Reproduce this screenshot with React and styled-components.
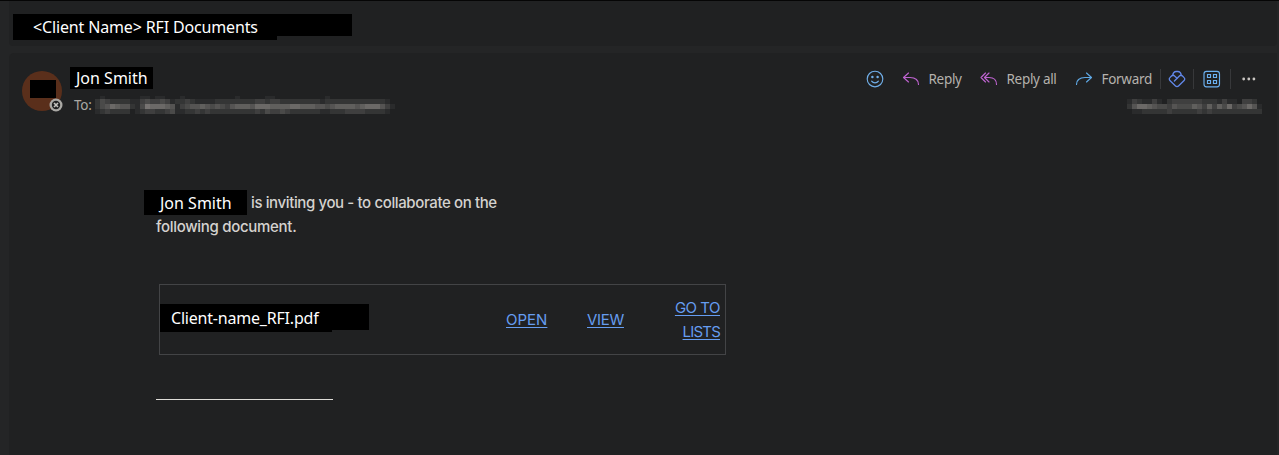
import React from "react";
import styled, { createGlobalStyle } from "styled-components";

const Global = createGlobalStyle`
  * { box-sizing: border-box; }
  body { margin: 0; background: #242526; overflow: hidden; }
`;

const ui = `"Noto Sans", "Open Sans", sans-serif`;

const Window = styled.main`
  height: 455px;
  display: flex;
  flex-direction: column;
  gap: 7px;
  padding: 0 2px 0 9px;
  border-top: 1px solid #050505;
  background: #242526;
  font-family: ${ui};
`;

const SubjectBar = styled.header`
  height: 45px;
  flex: none;
  padding: 13px 0 0 4px;
  background: #202122;
  border-radius: 0 0 4px 4px;
`;

const Message = styled.article`
  flex: 1;
  background: #202122;
  border-radius: 5px 0 0 0;
`;

const Row = styled.div`
  display: flex;
  align-items: flex-start;
`;

const Redaction = styled.div`
  flex: none;
  width: ${(p) => p.$w}px;
  height: ${(p) => p.$h}px;
  padding-left: ${(p) => p.$pad || 0}px;
  background: #000;
  color: #fff;
  font: 400 16px/${(p) => p.$line || p.$h}px ${ui};
  letter-spacing: ${(p) => p.$track || 0}px;
  white-space: nowrap;
`;

const MessageHead = styled.div`
  display: flex;
  height: 66px;
  padding: 14px 15px 0 13px;
`;

const Avatar = styled.div`
  position: relative;
  width: 40px;
  height: 40px;
  margin-top: 4px;
  padding: 9px 0 0 8px;
  border-radius: 50%;
  background: #5a2f1b;
`;

const Presence = styled.svg`
  position: absolute;
  left: 27px;
  top: 27px;
`;

const Sender = styled.div`
  flex: 1;
  padding-left: 8px;
`;

const Recipient = styled.div`
  display: flex;
  height: 18px;
  margin-top: 7px;
  padding-left: 4px;
`;

const ToLabel = styled.span`
  width: 21px;
  color: #aaa8a4;
  font-size: 13.5px;
  line-height: 19px;
  letter-spacing: -0.2px;
`;

const Tools = styled.div`
  display: flex;
  flex-direction: column;
  align-items: flex-end;
`;

const ToolRow = styled.nav`
  display: flex;
  align-items: center;
  height: 24px;
`;

const Tool = styled.button`
  display: flex;
  align-items: center;
  width: ${(p) => p.$w}px;
  height: 24px;
  padding: 0;
  border: 0;
  background: none;
  color: #b5b2ad;
  font: 13.5px/24px ${ui};
  letter-spacing: -0.3px;
  white-space: nowrap;
  svg { flex: none; margin-right: 8.5px; }
`;

const Divider = styled.i`
  width: 1px;
  height: 20px;
  margin-right: ${(p) => p.$gap}px;
  background: #37383a;
`;

const MosaicGrid = styled.div`
  display: grid;
  grid-template-columns: repeat(${(p) => p.$cols}, 5px);
  grid-template-rows: ${(p) => p.$rows};
`;

const Cell = styled.i`
  background: ${(p) => p.$shade};
`;

const DateStamp = styled.div`
  padding-top: 8px;
`;

const Body = styled.section`
  padding: 71px 0 0 135px;
  color: #d4d2cf;
  font: 500 15px/24px Inter, sans-serif;
`;

const Invite = styled.span`
  padding-left: 4px;
  line-height: 25px;
  letter-spacing: -0.38px;
  white-space: nowrap;
`;

const SecondLine = styled.div`
  padding-left: 12px;
  height: 24px;
  letter-spacing: -0.3px;
`;

const FileCard = styled.div`
  display: flex;
  align-items: center;
  width: 567px;
  height: 71px;
  margin: 45px 0 0 15px;
  padding-right: 5px;
  border: 1px solid #434446;
`;

const FileName = styled.div`
  display: flex;
  align-items: flex-start;
  width: 346px;
  margin-top: -4px;
`;

const Link = styled.a`
  width: ${(p) => p.$w}px;
  margin-left: ${(p) => p.$gap || 0}px;
  color: #669df0;
  font: 400 15px/24px Inter, sans-serif;
  letter-spacing: ${(p) => p.$track}px;
  text-align: ${(p) => p.$align || "left"};
  text-decoration: underline;
  text-underline-offset: 2px;
  white-space: nowrap;
`;

const TightText = styled.span`
  letter-spacing: -0.8px;
`;

const Rule = styled.hr`
  width: 177px;
  height: 1px;
  margin: 44px 0 0 12px;
  border: 0;
  background: #dedcd8;
`;

/* Each digit is a brightness step of one mosaic block. */
const steps = ["#202122", "#2a2b2c", "#343535", "#3f3f3f", "#4a4a49", "#555453", "#605f5d", "#6b6967", "#767371"];

const recipientBlocks = [
  "010000000110110001000000000010000011000000000010000000000000",
  "243222211343343122321111222222223323322222222122222222222210",
  "245765521487776513455654543566657776666776665545666656777531",
  "123222201233223411223232222222223243343222222112223333222210",
];
const dateBlocks = [
  "132113102333333222131103320",
  "257765443544465363647345751",
  "011222223222223232222222222",
];

function Mosaic({ data, rows }) {
  return (
    <MosaicGrid $cols={data[0].length} $rows={rows} aria-hidden="true">
      {data.flatMap((line, y) => [...line].map((n, x) => <Cell key={`${y}-${x}`} $shade={steps[n]} />))}
    </MosaicGrid>
  );
}

const line = { fill: "none", strokeWidth: 1.15, strokeLinecap: "round", strokeLinejoin: "round" };

const Smile = () => (
  <svg width="18" height="18" viewBox="0 0 18 18" {...line} stroke="#70aee8">
    <circle cx="9" cy="9" r="7.8" />
    <path d="M5.6 11.2c1.7 2.3 5.1 2.3 6.8 0" />
    <circle cx="6.4" cy="7" r=".65" fill="#70aee8" />
    <circle cx="11.6" cy="7" r=".65" fill="#70aee8" />
  </svg>
);
const ReplyIcon = () => (
  <svg width="18" height="18" viewBox="0 0 18 18" {...line} stroke="#bd63cf">
    <path d="M6.5 3 1.5 7.5l5 4.5M1.7 7.5H8c5 0 8.5 2.2 8.5 7" />
  </svg>
);
const ReplyAllIcon = () => (
  <svg width="18" height="18" viewBox="0 0 18 18" {...line} stroke="#bd63cf">
    <path d="M5.5 3 1 7.5 5.5 12M9 3 4.5 7.5 9 12M4.7 7.5H9c4.7 0 7.5 2.5 7.5 7" />
  </svg>
);
const ForwardIcon = () => (
  <svg width="18" height="18" viewBox="0 0 18 18" {...line} stroke="#5fa9e6">
    <path d="m11.5 3 5 4.5-5 4.5M16.3 7.5H10c-5 0-8.5 2.2-8.5 7" />
  </svg>
);
const LoopIcon = () => (
  <svg width="18" height="18" viewBox="0 0 18 18" {...line} strokeWidth="1.3" stroke="#6288ea">
    <path d="M4.9 5.6V4.9a3.3 3.3 0 0 1 3.3-3.4h1.6a3.3 3.3 0 0 1 3.3 3.4v.7" />
    <path d="M9.3 8.4 6.6 6a2.2 2.2 0 0 0-3.1 0L1.9 7.6a2 2 0 0 0 0 2.9l5.6 5.5a2.1 2.1 0 0 0 3 0l5.6-5.5a2 2 0 0 0 0-2.9L14.5 6a2.2 2.2 0 0 0-3.1 0l-5 5" />
  </svg>
);
const AppsIcon = () => (
  <svg width="18" height="18" viewBox="0 0 18 18" {...line} stroke="#6bb0f0">
    <rect x="1" y="1.3" width="15.5" height="15.5" rx="2.5" />
    <path d="M4.5 4.5h3v3h-3zM10.5 4.5h3v3h-3zM4.5 10.5h3v3h-3zM10.5 10.5h3v3h-3z" strokeLinejoin="miter" />
  </svg>
);
const MoreIcon = () => (
  <svg width="18" height="18" viewBox="0 0 18 18" fill="#c9c6c2">
    <circle cx="3.7" cy="9" r="1.4" /><circle cx="8.8" cy="9" r="1.4" /><circle cx="13.9" cy="9" r="1.4" />
  </svg>
);

export default function App() {
  return (
    <>
      <Global />
      <Window>
        <SubjectBar>
          <Row>
            <Redaction $w={264} $h={26} $pad={20} $track={-0.15}>&lt;Client Name&gt; RFI Documents</Redaction>
            <Redaction $w={75} $h={22} />
          </Row>
        </SubjectBar>
        <Message>
          <MessageHead>
            <Avatar>
              <Redaction $w={26} $h={18} />
              <Presence width="14" height="14" viewBox="0 0 14 14">
                <circle cx="7" cy="7" r="6.5" fill="#aaa9a5" />
                <circle cx="7" cy="7" r="4.2" fill="#202122" />
                <path d="m5 5 4 4m0-4L5 9" stroke="#c4c3bf" strokeWidth="1.6" />
              </Presence>
            </Avatar>
            <Sender>
              <Redaction $w={83} $h={22} $line={23} $pad={6}>Jon Smith</Redaction>
              <Recipient>
                <ToLabel>To:</ToLabel>
                <Mosaic data={recipientBlocks} rows="3px 5px 5px 5px" />
              </Recipient>
            </Sender>
            <Tools>
              <ToolRow>
                <Tool $w={36} aria-label="React"><Smile /></Tool>
                <Tool $w={78}><ReplyIcon />Reply</Tool>
                <Tool $w={95}><ReplyAllIcon />Reply all</Tool>
                <Tool $w={85}><ForwardIcon />Forward</Tool>
                <Divider $gap={7} />
                <Tool $w={25} aria-label="Loop"><LoopIcon /></Tool>
                <Divider $gap={9} />
                <Tool $w={27} aria-label="Apps"><AppsIcon /></Tool>
                <Divider $gap={9} />
                <Tool $w={22} aria-label="More"><MoreIcon /></Tool>
              </ToolRow>
              <DateStamp><Mosaic data={dateBlocks} rows="5px 5px 5px" /></DateStamp>
            </Tools>
          </MessageHead>
          <Body>
            <Row>
              <Redaction $w={103} $h={25} $line={27} $pad={16}>Jon Smith</Redaction>
              <Invite>is inviting you - to collaborate on the</Invite>
            </Row>
            <SecondLine>following document.</SecondLine>
            <FileCard>
              <FileName>
                <Redaction $w={172} $h={28} $pad={11} $track={-0.2}>Client-name_RFI.pdf</Redaction>
                <Redaction $w={37} $h={26} />
              </FileName>
              <Link $w={42} $track={0}>OPEN</Link>
              <Link $w={38} $gap={39} $track={-0.3}>VIEW</Link>
              <Link $w={60} $gap={35} $align="right" $track={-0.5}>GO TO<br /><TightText>LISTS</TightText></Link>
            </FileCard>
            <Rule />
          </Body>
        </Message>
      </Window>
    </>
  );
}
